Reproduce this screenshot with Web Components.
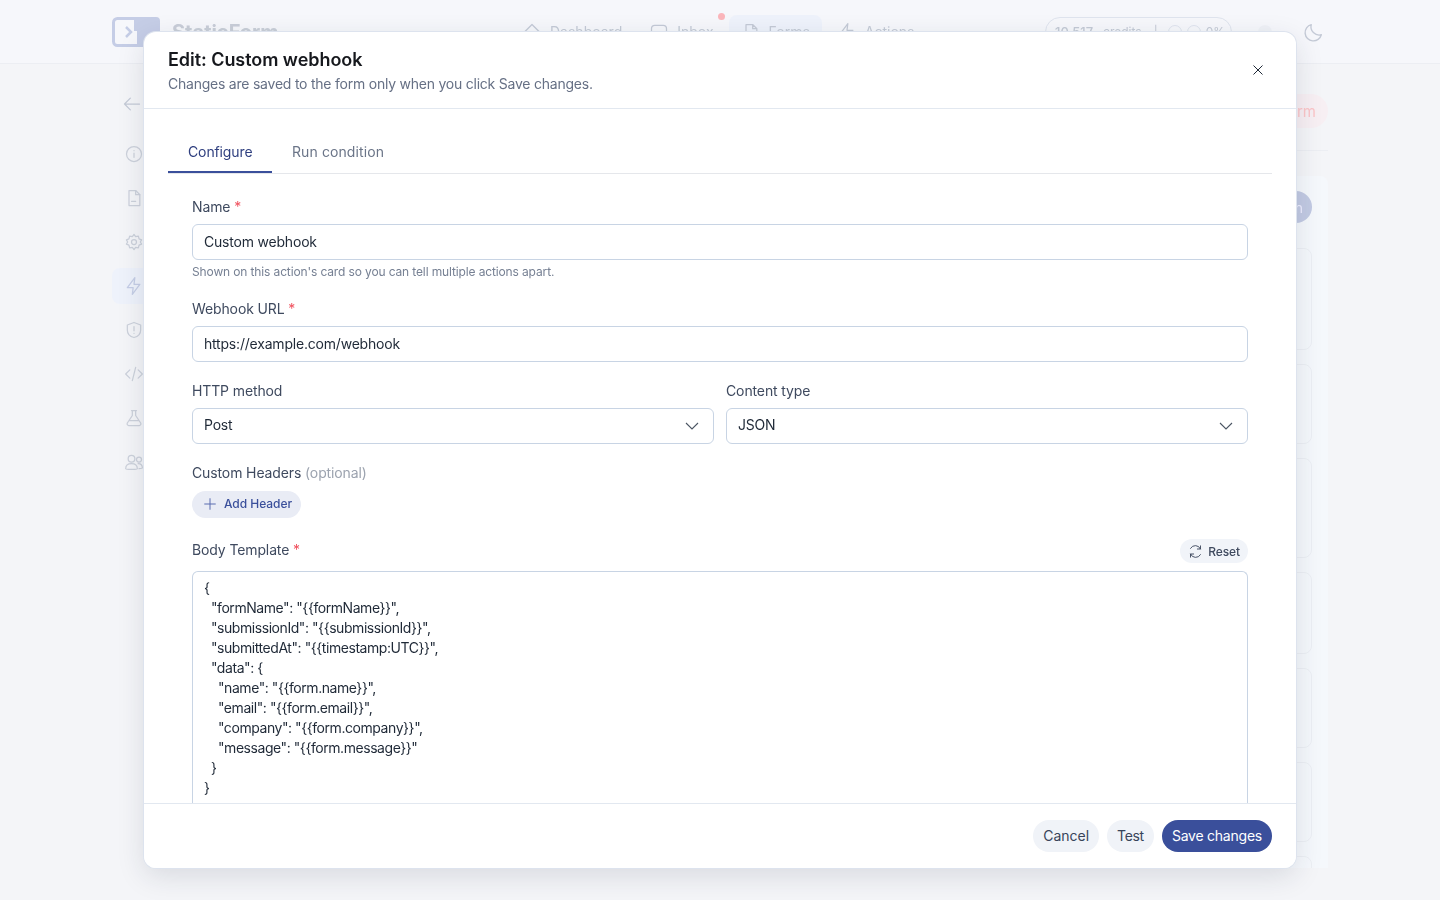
<!DOCTYPE html>
<html><head><meta charset="utf-8">
<style>
html,body{margin:0;height:100%;overflow:hidden}
body{font-family:Inter,"Liberation Sans",sans-serif;background:#f4f5f8}
</style></head><body>
<app-shell></app-shell>
<edit-dialog></edit-dialog>
<script>
const FONT='Inter,"Liberation Sans",sans-serif';
function def(name,html){
  customElements.define(name,class extends HTMLElement{constructor(){super();this.attachShadow({mode:'open'}).innerHTML=html;}});
}
const svg=(d,s=20,w=1.5,extra='')=>`<svg width="${s}" height="${s}" viewBox="0 0 24 24" fill="none" stroke="currentColor" stroke-width="${w}" stroke-linecap="round" stroke-linejoin="round" ${extra}>${d}</svg>`;
const I={
 home:'<path d="M3 12 12 3l9 9M5 10v10h14V10"/>',
 inbox:'<rect x="3" y="4" width="18" height="16" rx="4"/>',
 doc:'<path d="M6 3h8l5 5v13H6zM14 3v5h5"/>',
 bolt:'<path d="M13 2 4 14h7l-1 8 9-12h-7z"/>',
 info:'<circle cx="12" cy="12" r="9"/><path d="M12 11v5M12 8h.01"/>',
 page:'<path d="M6 3h8l5 5v13H6z"/><path d="M14 3v5h5M9 16h5"/>',
 gear:'<circle cx="12" cy="12" r="3"/><path d="M12 3l2 2.600 3.200-.6.9 3.200 3 1.300-1.500 2.500 1.500 2.500-3 1.300-.9 3.200-3.200-.6L12 21l-2-2.600-3.200.6-.9-3.200-3-1.300L4.400 12 2.900 9.500l3-1.300.9-3.200 3.200.6z"/>',
 shield:'<path d="M12 3l8 3v6c0 5-3.500 8-8 9-4.500-1-8-4-8-9V6z"/><path d="M12 8v5M12 16h.01"/>',
 code:'<path d="M7 7l-5 5 5 5M17 7l5 5-5 5M14 4l-4 16"/>',
 flask:'<path d="M9 3h6M10 3v6l-6 9a2 2 0 0 0 2 3h12a2 2 0 0 0 2-3l-6-9V3M6.500 15h11"/>',
 users:'<circle cx="9" cy="8" r="4"/><circle cx="18" cy="9" r="3"/><path d="M2 20c0-4 3-6 7-6s7 2 7 6c0 1-14 1-14 0zM17 14c3 0 5 2 5 5 0 1-2 1-4 1"/>',
 moon:'<path d="M20 15A9 9 0 0 1 9 4a9 9 0 1 0 11 11z"/>',
 arrow:'<path d="M21 12H3M10 5l-7 7 7 7"/>'
};
def('app-shell',`<style>
:host{display:block;position:absolute;inset:0;overflow:hidden;color:#c4cad6;font-family:${FONT};filter:blur(.6px)}
.top{height:64px;box-sizing:border-box;background:#f6f7fb;border-bottom:1px solid #eceef3;display:flex;align-items:center;padding:0 112px}
.logo{display:flex;align-items:center;gap:12px;width:398px;flex:none;color:#c5cde6}
.brand{font-size:20px;font-weight:700;color:#c9ced8}
nav{display:flex;gap:3px;align-items:center;font-size:14px;width:535px;flex:none}
nav span{display:flex;gap:8px;align-items:center;height:34px;padding:0 12px;border-radius:8px;position:relative}
nav .on{background:#eef2fb}
.dot{position:absolute;left:-11px;top:-2px;width:7px;height:7px;border-radius:50%;background:#fbb6bb}
.credits{border:1px solid #dfe4ee;border-radius:16px;height:30px;width:187px;flex:none;box-sizing:border-box;padding:0 9px;display:flex;align-items:center;font-size:12px;white-space:nowrap}
.credits em{font-style:normal;font-weight:500;font-size:13px;margin-right:10px}
.ring{width:14px;height:14px;border:1px solid #dfe4ee;border-radius:50%;flex:none;margin-right:5px;box-sizing:border-box}
.end{margin-left:26px;display:flex;gap:31px;align-items:center}
.av{width:14px;height:14px;border-radius:50%;background:#eff1f6}
.side{position:absolute;left:112px;top:84px;width:44px;display:flex;flex-direction:column;align-items:center;color:#ccd1db}
.side>div{height:36px;width:44px;margin-bottom:8px;display:flex;align-items:center;justify-content:center}
.side .back{height:40px;color:#c4cad6;margin-left:-4px;margin-bottom:12px}
.side .act{background:#eef2fb;border-radius:8px;color:#c5cde6}
.del{position:absolute;right:112px;top:94px;height:34px;width:120px;border-radius:17px;background:#f7eff3;color:#fbc5c8;font-size:15px;display:flex;align-items:center;justify-content:flex-end;padding-right:12px;box-sizing:border-box}
.rule{position:absolute;left:1200px;right:112px;top:150px;border-top:1px solid #eceef3}
.panel{position:absolute;left:1200px;right:112px;top:176px;height:692px;overflow:hidden;background:#f5f8fc;border-radius:8px 8px 0 0}
.add{position:absolute;right:16px;top:15px;width:32px;height:32px;border-radius:16px;background:#c2cae3;color:#eef;font-size:14px;display:flex;justify-content:flex-end;align-items:center;padding-right:9px;box-sizing:border-box}
.card{position:absolute;right:16px;width:80px;border:1px solid #eceff4;border-radius:8px;box-sizing:border-box}
</style>
<div class="top">
 <div class="logo"><svg width="48" height="30" viewBox="0 0 48 30" fill="none"><rect x="1.500" y="1.500" width="33" height="27" rx="4" stroke="#c5cde6" stroke-width="3"/><path d="M14 10l5 5-5 5" stroke="#c5cde6" stroke-width="2.500"/><path d="M22 0h22a4 4 0 0 1 4 4v16H34v10h-9V14h-3z" fill="#c5cde6"/></svg><span class="brand">StaticForm</span></div>
 <nav><span>${svg(I.home,20)}Dashboard</span><span>${svg(I.inbox,20)}Inbox</span><span class="on"><i class="dot"></i>${svg(I.doc,20)}Forms</span><span>${svg(I.bolt,20)}Actions</span></nav>
 <div class="credits"><em>10,517</em><span style="margin-right:12px">credits</span><span style="margin-right:10px">|</span><i class="ring"></i><i class="ring"></i><span>0%</span></div>
 <div class="end"><i class="av"></i>${svg(I.moon,22)}</div>
</div>
<div class="side">
 <div class="back">${svg(I.arrow,20)}</div>
 ${['info','page','gear','bolt','shield','code','flask','users'].map(k=>`<div class="${k=='bolt'?'act':''}">${svg(I[k],20)}</div>`).join('')}
</div>
<div class="del">rm</div>
<div class="rule"></div>
<div class="panel"><div class="add">n</div>
${[[72,102],[188,80],[282,100],[396,82],[492,80],[586,80],[680,60]].map(([t,h])=>`<div class="card" style="top:${t}px;height:${h}px"></div>`).join('')}
</div>
`);

def('form-field',`<style>
:host{display:block;color:#3f4a5f;font-family:${FONT}}
.l{display:flex;align-items:center;justify-content:space-between;font-size:14px;letter-spacing:-.12px;line-height:20px;margin-bottom:7px;min-height:20px}
</style><div class="l"><div><slot name="label"></slot></div><slot name="aside"></slot></div><slot></slot>`);

def('text-box',`<style>
:host{display:flex;align-items:center;box-sizing:border-box;height:36px;padding:0 11px 2px;border:1px solid #c8d4e4;border-radius:6px;background:#fff;color:#1f2937;font-family:${FONT};font-size:14px;letter-spacing:-.2px;white-space:pre}
</style><slot></slot>`);

def('select-box',`<style>
:host{display:flex;align-items:center;justify-content:space-between;box-sizing:border-box;height:36px;padding:0 14px 0 11px;border:1px solid #c8d4e4;border-radius:6px;background:#fff;color:#1f2937;font-family:${FONT};font-size:14px;letter-spacing:-.2px}
svg{display:block;color:#4b5563}
span{padding-bottom:3px}
</style><span><slot></slot></span><svg width="14" height="8" viewBox="0 0 14 8" fill="none" stroke="currentColor" stroke-width="1.100"><path d="M1 1l6 6 6-6"/></svg>`);

def('pill-btn',`<style>
:host{display:inline-flex;align-items:center;justify-content:center;height:32px;padding:0 10px 2px;border-radius:16px;background:#f0f3f8;color:#38445a;font-family:${FONT};font-size:14px;white-space:nowrap;box-sizing:border-box}
:host([primary]){background:#3a4f9b;color:#fff}
</style><slot></slot>`);

def('edit-dialog',`<style>
:host{display:flex;position:fixed;inset:0;align-items:center;justify-content:center}
.m{width:1152px;height:836px;box-sizing:border-box;background:#fff;border-radius:12px;box-shadow:0 0 0 1px #dde3ee,0 8px 28px rgba(30,41,59,.13);display:flex;flex-direction:column;overflow:hidden;font-family:${FONT}}
header{height:77px;box-sizing:border-box;flex:none;border-bottom:1px solid #e2e8f0;padding:15px 24px 0;position:relative}
h2{margin:0;font-size:18px;line-height:25px;font-weight:600;color:#16181d;letter-spacing:-.05px}
p{margin:0;font-size:14px;line-height:24px;letter-spacing:-.23px;color:#667085}
.x{position:absolute;right:32px;top:32px;color:#1f2937;display:block}
main{flex:1;min-height:0;overflow:hidden;padding:23px 24px 0}
.tabs{display:flex;height:41px;border-bottom:1px solid #e5e7eb;font-size:14px;color:#6b7588}
.tabs div{padding:0 20px;display:flex;align-items:center;height:41px;box-sizing:border-box;border-bottom:2px solid transparent;letter-spacing:.1px}
.tabs .on{color:#2f3f7f;border-bottom-color:#3a4f9b;width:104px;white-space:nowrap;letter-spacing:-.12px}
.form{padding:23px 24px 0;display:flex;flex-direction:column}
.hint{font:12px/16px Inter,sans-serif;letter-spacing:-.13px;color:#768093;margin-top:4px}
.two{display:grid;grid-template-columns:1fr 1fr;gap:12px}
.opt{color:#9ca3af}.r{color:#f0505d}
.add{display:inline-flex;align-items:center;gap:6px;height:27px;width:109px;margin-top:1px;box-sizing:border-box;padding:0 10px 2px;border-radius:14px;background:#e9ecf5;color:#3a4f9b;font:500 12px Inter,sans-serif;letter-spacing:-.05px;white-space:nowrap}
.add svg{color:#5a6db0;flex:none;margin-top:1px}
.reset{display:inline-flex;align-items:center;gap:5px;height:24px;margin-top:2px;padding:0 8px;border-radius:12px;background:#f1f4f9;color:#3f4a5f;font:500 12px Inter,sans-serif}
.ta{border:1px solid #c8d4e4;border-bottom:0;border-radius:6px 6px 0 0;margin-top:8px;height:260px;box-sizing:border-box;padding:6px 11px;font-size:14px;letter-spacing:-.44px;line-height:20px;color:#1f2937;white-space:pre}
footer{height:65px;flex:none;box-sizing:border-box;border-top:1px solid #e2e8f0;display:flex;justify-content:flex-end;align-items:center;gap:8px;padding:0 24px;background:#fff}
</style>
<div class="m">
<header><h2>Edit: Custom webhook</h2><p>Changes are saved to the form only when you click Save changes.</p>
<svg class="x" width="12" height="12" viewBox="0 0 12 12" fill="none" stroke="currentColor" stroke-width="1"><path d="M1.500 1.500l9 9M10.500 1.500l-9 9"/></svg></header>
<main>
<div class="tabs"><div class="on">Configure</div><div>Run condition</div></div>
<div class="form">
<form-field><span slot="label">Name <span class="r">*</span></span><text-box>Custom webhook</text-box></form-field>
<div class="hint">Shown on this action's card so you can tell multiple actions apart.</div>
<form-field style="margin-top:19px"><span slot="label">Webhook URL <span class="r">*</span></span><text-box>https://example.com/webhook</text-box></form-field>
<div class="two" style="margin-top:19px">
<form-field><span slot="label">HTTP method</span><select-box>Post</select-box></form-field>
<form-field><span slot="label">Content type</span><select-box>JSON</select-box></form-field>
</div>
<form-field style="margin-top:19px"><span slot="label">Custom Headers <span class="opt">(optional)</span></span><span class="add">${svg('<path d="M12 4v16M4 12h16"/>',16,1.500)}Add Header</span></form-field>
<form-field style="margin-top:19px"><span slot="label">Body Template <span class="r">*</span></span><span slot="aside" class="reset">${svg('<path d="M20 8a9 9 0 0 0-16-1M20 3v5h-5M4 16a9 9 0 0 0 16 1M4 21v-5h5"/>',15,1.500)}Reset</span><div class="ta">{
  "formName": "{{formName}}",
  "submissionId": "{{submissionId}}",
  "submittedAt": "{{timestamp:UTC}}",
  "data": {
    "name": "{{form.name}}",
    "email": "{{form.email}}",
    "company": "{{form.company}}",
    "message": "{{form.message}}"
  }
}</div></form-field>
</div>
</main>
<footer><pill-btn style="letter-spacing:-.05px">Cancel</pill-btn><pill-btn style="letter-spacing:-.3px">Test</pill-btn><pill-btn primary style="letter-spacing:-.23px">Save changes</pill-btn></footer>
</div>`);
</script>
</body></html>
